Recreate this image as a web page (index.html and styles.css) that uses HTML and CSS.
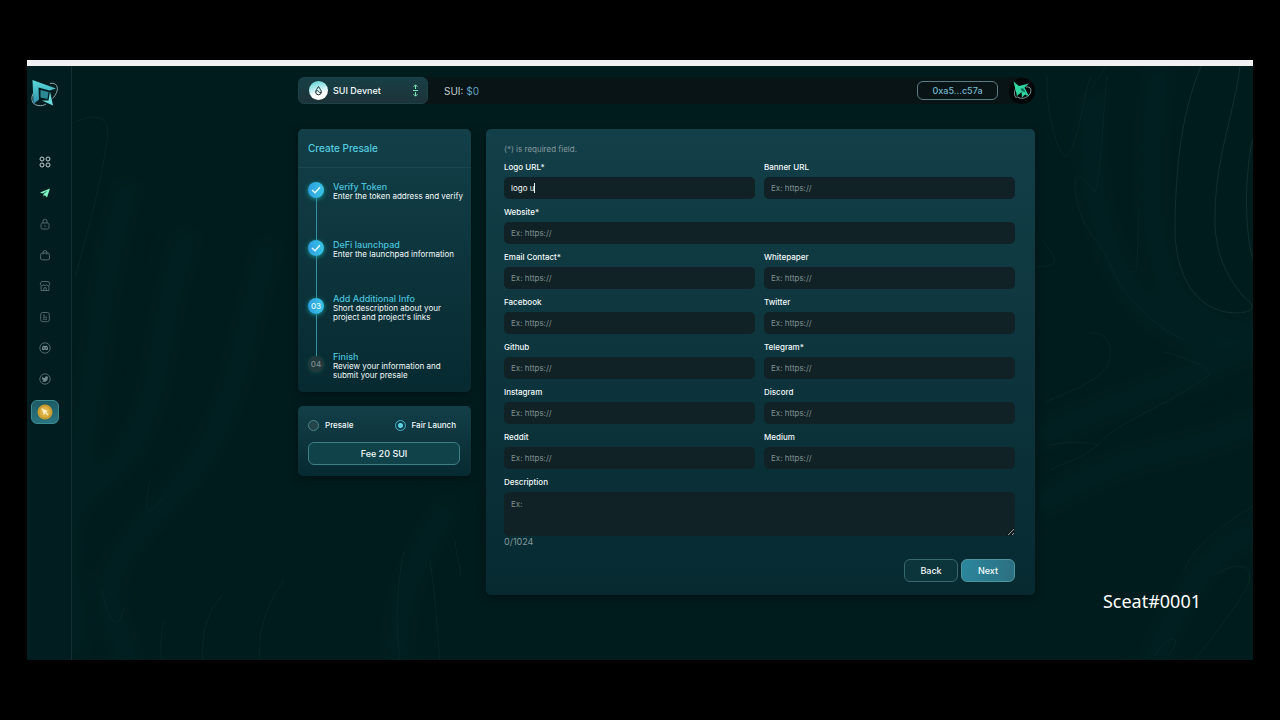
FILE: index.html
```html
<!DOCTYPE html>
<html lang="en">
	<head>
		<meta charset="UTF-8">
		<title>Create Presale</title>
		<link rel="stylesheet" href="styles.css">
	</head>
	<body>
		<div class="app">
			<!-- background swirls -->
			<svg class="swirls" viewBox="27 66 1226 594" preserveAspectRatio="xMidYMid slice" aria-hidden="true">
				<g class="bands">
					<path d="M1160 66C1145 160 1145 280 1190 310S1240 330 1260 330"/>
					<path d="M1095 90C1080 190 1110 260 1130 290S1200 350 1260 350"/>
					<path d="M1035 440C1110 400 1170 390 1260 340"/>
					<path d="M1035 510C1130 440 1190 460 1260 420"/>
					<path d="M1150 670C1180 590 1220 540 1260 530"/>
					<path d="M130 180C90 300 100 420 60 520"/>
					<path d="M190 230C150 330 170 430 100 480S90 600 70 660"/>
					<path d="M270 240C230 380 240 430 150 520S150 640 120 670"/>
					<path d="M400 670C390 590 430 540 450 500"/>
				</g>
				<g class="lines">
					<path d="M1201 66C1185 105 1176 150 1175 225C1174 280 1200 313 1236 313C1262 312 1250 302 1244 297C1225 275 1214 250 1215 215C1215 160 1235 110 1240 66"/>
					<path d="M1254 135C1244 170 1244 235 1254 262"/>
				</g>
				<g class="lines faint">
					<path d="M1047 75C1046 110 1055 145 1064 156C1075 160 1083 100 1090 77C1095 90 1100 75 1105 66"/>
					<path d="M1107 75C1103 120 1100 180 1095 192C1082 175 1075 172 1075 185C1076 225 1100 240 1110 265C1130 310 1170 335 1185 340"/>
					<path d="M1139 210L1137 265C1137 275 1130 272 1128 270"/>
					<path d="M1035 267C1060 266 1060 262 1042 240"/>
					<path d="M1090 333C1110 332 1114 350 1108 365C1095 385 1060 395 1045 402"/>
					<path d="M1165 352C1200 362 1218 372 1205 378C1150 415 1120 420 1098 445C1080 440 1065 443 1050 445M1098 445C1080 460 1065 462 1050 470"/>
					<path d="M1254 506C1220 525 1190 550 1185 570"/>
					<path d="M1213 575C1240 560 1255 565 1248 585C1235 610 1210 640 1195 660"/>
					<path d="M1155 656C1160 645 1170 636 1176 641C1174 650 1168 654 1164 660"/>
					<path d="M75 122C90 115 112 112 107 140C100 190 85 240 75 278"/>
					<path d="M150 480C142 520 150 515 162 498"/>
					<path d="M102 590C112 634 120 626 124 608"/>
					<path d="M404 552C395 590 396 630 400 660M430 560C436 600 437 630 440 660M455 540C456 555 460 565 461 575"/>
					<path d="M222 595C202 620 202 640 203 660M284 580C262 610 258 640 260 660M164 620C160 640 160 650 162 660"/>
				</g>
			</svg>

			<aside class="sidebar">
				<a href="#" class="logo" aria-label="Home">
					<svg width="30" height="30" viewBox="0 0 30 30">
						<defs>
							<linearGradient id="lg" x1="0" y1="0" x2="0" y2="1">
								<stop offset="0" stop-color="#5cd9da"/>
								<stop offset="1" stop-color="#2f8fa8"/>
							</linearGradient>
						</defs>
						<path d="M20 5.500C26 4 29 9 26.500 14.500C25.500 17 24 19 22.500 20.500M3.500 15C.5 20 1.500 26.500 8 27.500C11 28 14 27.500 16 26" fill="none" stroke="#9db7ba" stroke-width=".9"/>
						<path fill="url(#lg)" d="M2.500 2L26 10.500L19.500 12.500L8.500 9.500L9 21.500L3.500 26Z"/>
						<path fill="#2a8992" d="M10.500 12L18.500 14L17.500 21L10.500 19.500Z"/>
						<path fill="#6fdde0" d="M20 13.500L23 27.500L12 22.500L18.500 22.500Z"/>
					</svg>
				</a>
				<nav class="menu">
					<a href="#" class="bright" aria-label="Dashboard">
						<svg viewBox="0 0 12 12"><circle cx="3" cy="3" r="2"/><circle cx="9" cy="3" r="2"/><circle cx="3" cy="9" r="2"/><circle cx="9" cy="9" r="2"/></svg>
					</a>
					<a href="#" class="active" aria-label="Launchpad">
						<svg viewBox="0 0 12 12"><path d="M11 1.500L8 10.500L5.800 8.200L4.500 9.500V7L8.500 3.800L3.500 6.500L1 5.500Z"/></svg>
					</a>
					<a href="#" aria-label="Lock">
						<svg viewBox="0 0 12 12"><rect x="2" y="5" width="8" height="6" rx="1.500"/><path d="M4 5V3.200A2 2 0 0 1 8 3.200V5M6 7.200V8.800"/></svg>
					</a>
					<a href="#" aria-label="Shop">
						<svg viewBox="0 0 12 12"><path d="M3 4H9Q10 4 10.200 5L10.500 9Q10.500 10.800 8.800 10.800H3.200Q1.500 10.800 1.500 9L1.800 5Q2 4 3 4ZM4.200 5.500V3Q4.200 1.500 6 1.500T7.800 3V5.500"/></svg>
					</a>
					<a href="#" aria-label="Market">
						<svg viewBox="0 0 12 12"><path d="M2.500 1.500H9.500L10.800 4.200Q10.500 5.600 9.200 5.600T7.500 4.500Q7.200 5.600 6 5.600T4.500 4.500Q4.200 5.600 2.900 5.600T1.200 4.200ZM2 6V10.500H10V6M4.800 10.500V7.800H7.200V10.500"/></svg>
					</a>
					<a href="#" aria-label="Docs">
						<svg viewBox="0 0 12 12"><rect x="1.700" y="1.500" width="8.600" height="9.200" rx="2"/><path d="M4 4.200H6M4 6.200H8M4 8.200H8"/></svg>
					</a>
					<a href="#" aria-label="Discord">
						<svg viewBox="0 0 12 12"><circle cx="6" cy="6" r="5.200"/><path class="solid" d="M3.800 4L5 3.600L5.300 4.100H6.700L7 3.600L8.200 4Q9.300 5.800 9.100 7.500Q8.400 8.200 7.500 8.300L7.100 7.700H4.900L4.500 8.300Q3.600 8.200 2.900 7.500Q2.700 5.800 3.800 4ZM4.700 5.300A.6.600 0 1 0 4.700 6.600A.6.600 0 1 0 4.700 5.300M7.300 5.300A.6.600 0 1 0 7.300 6.600A.6.600 0 1 0 7.300 5.300"/></svg>
					</a>
					<a href="#" aria-label="Twitter">
						<svg viewBox="0 0 12 12"><circle cx="6" cy="6" r="5.200"/><path class="solid" d="M3 3.800Q4.300 5 5.900 5Q5.800 3.300 7.300 3.200Q8 3.200 8.400 3.700L9.300 3.400L8.800 4.200L9.400 4.200L8.800 4.900Q8.700 8.500 5.200 8.800Q3.800 8.800 2.900 8.200Q4 8.200 4.500 7.700Q3.600 7.500 3.400 6.700H3.900Q3 6.200 3 5.300L3.400 5.400Q2.700 4.700 3 3.800Z"/></svg>
					</a>
				</nav>
				<button type="button" class="coin" aria-label="Token">
					<svg width="16" height="16" viewBox="0 0 16 16">
						<circle cx="8" cy="8" r="7.500" fill="#cfa02f"/>
						<circle cx="8" cy="8" r="6" fill="#dcb044" stroke="#b98a22" stroke-width=".6"/>
						<path d="M4.500 4L11 7L9.200 8L11.500 10.500L10.500 11.500L8.500 9.200L6.800 11Z" fill="#fbeec4"/>
					</svg>
				</button>
			</aside>

			<main class="main">
				<header class="topbar">
					<label class="network">
						<svg width="19" height="19" viewBox="0 0 19 19" aria-hidden="true">
							<defs>
								<linearGradient id="drop" x1=".3" y1="0" x2=".6" y2="1">
									<stop offset="0" stop-color="#5fd6d9"/>
									<stop offset=".7" stop-color="#fff"/>
								</linearGradient>
							</defs>
							<circle cx="9.500" cy="9.500" r="9.500" fill="url(#drop)"/>
							<path d="M9.500 5.500C11 8 12.300 9.300 12.300 11A2.800 2.800 0 0 1 6.700 11C6.700 9.300 8 8 9.500 5.500ZM7 10.200Q8.800 9 9.700 10.500T12.200 11.500" fill="none" stroke="#1d3034"/>
						</svg>
						<select aria-label="Network">
							<option>SUI Devnet</option>
						</select>
						<svg width="7" height="13" viewBox="0 0 7 13" class="updown" aria-hidden="true">
							<path d="M3.500 5V1M1.500 2.800L3.500.800L5.500 2.800M1 6.500H6M3.500 8V12M1.500 10.200L3.500 12.200L5.500 10.200"/>
						</svg>
					</label>
					<div class="account">
						<span class="balance">SUI: <span class="amount">$0</span></span>
						<button type="button" class="address">0xa5...c57a</button>
						<svg width="26" height="26" viewBox="0 0 26 26" aria-hidden="true">
							<circle cx="13" cy="13" r="13" fill="#010607"/>
							<path d="M17 9C22 8 23.500 13 20 17C16 21.500 10 21 7.500 18M7.500 10C5 12.500 4.500 17 7.500 20" fill="none" stroke="#9fc9bf" stroke-width=".8"/>
							<path d="M4.500 3.500L10 8L20 5.500L15.500 9.500L20 18.500L16 16.500L13 19.500L12.500 14L8 18Z" fill="#2fd6a0"/>
							<path d="M11.500 10.500L14.500 10.500L16.500 14.500L12.500 13Z" fill="#0c6f5c"/>
						</svg>
					</div>
				</header>

				<div class="content">
					<div class="left">
						<section class="panel steps">
							<h1>Create Presale</h1>
							<ol>
								<li>
									<span class="dot done"><svg width="10" height="8" viewBox="0 0 10 8"><path d="M1 4L4 6.700L9 1.300"/></svg></span>
									<div><h2>Verify Token</h2><p>Enter the token address and verify</p></div>
								</li>
								<li>
									<span class="dot done"><svg width="10" height="8" viewBox="0 0 10 8"><path d="M1 4L4 6.700L9 1.300"/></svg></span>
									<div><h2>DeFi launchpad</h2><p>Enter the launchpad information</p></div>
								</li>
								<li>
									<span class="dot current">03</span>
									<div><h2>Add Additional Info</h2><p>Short description about your project and project's links</p></div>
								</li>
								<li>
									<span class="dot">04</span>
									<div><h2>Finish</h2><p>Review your information and submit your presale</p></div>
								</li>
							</ol>
						</section>
						<section class="panel kind">
							<div class="radios">
								<label><input type="radio" name="kind"> Presale</label>
								<label><input type="radio" name="kind" checked> Fair Launch</label>
							</div>
							<button type="button" class="fee">Fee 20 SUI</button>
						</section>
					</div>

					<form class="panel info" action="" method="post">
						<p class="note">(*) is required field.</p>
						<div class="fields">
							<div class="field"><label for="logo">Logo URL*</label><input type="text" id="logo" class="typing" value="logo u"></div>
							<div class="field"><label for="banner">Banner URL</label><input type="text" id="banner" placeholder="Ex: https://"></div>
							<div class="field wide"><label for="website">Website*</label><input type="text" id="website" placeholder="Ex: https://"></div>
							<div class="field"><label for="email">Email Contact*</label><input type="text" id="email" placeholder="Ex: https://"></div>
							<div class="field"><label for="whitepaper">Whitepaper</label><input type="text" id="whitepaper" placeholder="Ex: https://"></div>
							<div class="field"><label for="facebook">Facebook</label><input type="text" id="facebook" placeholder="Ex: https://"></div>
							<div class="field"><label for="twitter">Twitter</label><input type="text" id="twitter" placeholder="Ex: https://"></div>
							<div class="field"><label for="github">Github</label><input type="text" id="github" placeholder="Ex: https://"></div>
							<div class="field"><label for="telegram">Telegram*</label><input type="text" id="telegram" placeholder="Ex: https://"></div>
							<div class="field"><label for="instagram">Instagram</label><input type="text" id="instagram" placeholder="Ex: https://"></div>
							<div class="field"><label for="discord">Discord</label><input type="text" id="discord" placeholder="Ex: https://"></div>
							<div class="field"><label for="reddit">Reddit</label><input type="text" id="reddit" placeholder="Ex: https://"></div>
							<div class="field"><label for="medium">Medium</label><input type="text" id="medium" placeholder="Ex: https://"></div>
							<div class="field wide"><label for="description">Description</label><textarea id="description" maxlength="1024" placeholder="Ex:"></textarea></div>
						</div>
						<p class="counter">0/1024</p>
						<div class="actions">
							<button type="button">Back</button>
							<button type="submit" class="next">Next</button>
						</div>
					</form>
				</div>
			</main>
			<div class="watermark">Sceat#0001</div>
		</div>
	</body>
</html>
```
FILE: styles.css
```css
* {
	box-sizing: border-box;
	margin: 0;
	padding: 0;
}
body {
	min-height: 100vh;
	padding: 60px 27px;
	background-color: #000;
	color: #f4fafb;
	font-family: Inter, "Liberation Sans", sans-serif;
	font-size: 8px;
	line-height: 12px;
}
button, input, select, textarea {
	font: inherit;
	color: inherit;
}
button {
	cursor: pointer;
}
.app {
	position: relative;
	display: flex;
	min-height: calc(100vh - 120px);
	border-top: 6px solid #f1f0f2;
	background-color: #011c1d;
	overflow: hidden;
}
.swirls {
	position: absolute;
	top: 0;
	left: 0;
	width: 100%;
	height: 100%;
	fill: none;
}
.bands {
	stroke: #022629;
	stroke-width: 24;
	opacity: .4;
	filter: blur(10px);
}
.lines {
	stroke: #122f30;
	stroke-width: 1;
}
.faint {
	stroke: #082627;
}

/* sidebar */
.sidebar {
	position: relative;
	display: flex;
	flex-direction: column;
	align-items: center;
	width: 45px;
	padding: 12px 8px 0 0;
	border-right: 1px solid #142e31;
	background-color: #011d20;
}
.logo {
	height: 30px;
}
.menu {
	display: flex;
	flex-direction: column;
	margin-top: 38px;
}
.menu a {
	display: flex;
	align-items: center;
	height: 31px;
}
.menu svg {
	width: 12px;
	height: 12px;
	fill: none;
	stroke: #64797c;
	stroke-width: .8;
}
.menu .bright svg {
	stroke: #c3cfd0;
	stroke-width: 1;
}
.menu .active svg {
	fill: #7df5c0;
	stroke: none;
}
.menu .solid {
	fill: #74898c;
	fill-rule: evenodd;
	stroke: none;
}
.coin {
	display: flex;
	align-items: center;
	justify-content: center;
	width: 28px;
	height: 24px;
	margin-top: 6px;
	border: 1px solid #3c8a92;
	border-radius: 6px;
	background: linear-gradient(#1d5a64, #2b7580);
}

/* main column */
.main {
	position: relative;
	flex: 1;
	padding: 11px 20px 65px 28px;
}
.topbar, .content {
	display: flex;
	max-width: 737px;
	margin: 0 auto;
}
.topbar {
	height: 27px;
	font-size: 10px;
	background: #081416;
	border-radius: 6px 13px 13px 6px;
}
.network {
	display: flex;
	align-items: center;
	gap: 5px;
	width: 130px;
	padding: 0 8px 0 10px;
	border: 1px solid #1c4248;
	border-radius: 6px;
	background: linear-gradient(#183f46, #1c3338);
}
.network select {
	flex: 1;
	min-width: 0;
	appearance: none;
	border: none;
	background: none;
	font-size: 9px;
	font-weight: 500;
}
.updown {
	fill: none;
	stroke: #7be3b4;
}
.account {
	display: flex;
	flex: 1;
	align-items: center;
	padding-left: 16px;
}
.balance {
	flex: 1;
	color: #c5d0d2;
}
.amount {
	color: #62a3c6;
}
.address {
	width: 81px;
	height: 19px;
	margin-right: 11px;
	border: 1px solid #5c7c84;
	border-radius: 6px;
	background: none;
	color: #79b8cd;
	font-size: 9px;
	font-weight: 500;
}
.content {
	align-items: flex-start;
	gap: 15px;
	margin-top: 25px;
}
.panel {
	border-radius: 5px;
	background: linear-gradient(#133f48, #072a31);
	box-shadow: 0 3px 8px rgba(0, 10, 12, .5);
}
.left {
	display: flex;
	flex-direction: column;
	gap: 14px;
	width: 173px;
}
.steps h1 {
	padding: 13px 10px 12px;
	border-bottom: 1px solid #1c464d;
	color: #55cde0;
	font-size: 10px;
	font-weight: 500;
	line-height: 13px;
}
.steps ol {
	display: flex;
	flex-direction: column;
	gap: 28px;
	padding: 7px 6px 13px 10px;
	list-style: none;
}
.steps li {
	position: relative;
	display: flex;
	align-items: center;
	gap: 9px;
	height: 30px;
}
.steps li div {
	flex: 1;
	padding-top: 2px;
}
.steps li + li::before {
	content: "";
	position: absolute;
	left: 8px;
	bottom: 23px;
	width: 1px;
	height: 42px;
	background-color: #36919f;
}
.steps h2 {
	color: #49c3dc;
	font-size: 9px;
	font-weight: 500;
	line-height: 11px;
}
.steps p {
	max-width: 130px;
	line-height: 9px;
}
.dot {
	display: flex;
	align-items: center;
	justify-content: center;
	width: 16px;
	height: 16px;
	border-radius: 50%;
	background-color: #21393d;
	color: #7d8d90;
	font-weight: 500;
	box-shadow: 0 1px 4px rgba(20, 90, 80, .6);
}
.done, .current {
	background: linear-gradient(90deg, #2d9ee0, #38c5e6);
	color: #e6f7fb;
	box-shadow: 0 1px 4px rgba(20, 200, 200, .7);
}
.dot svg {
	fill: none;
	stroke: #e6f7fb;
	stroke-width: 1.5;
}
.kind {
	padding: 13px 11px 11px 10px;
}
.radios {
	display: flex;
	justify-content: space-between;
	padding-right: 4px;
	font-weight: 500;
}
.radios label {
	display: flex;
	align-items: center;
	gap: 6px;
}
.radios input {
	width: 11px;
	height: 11px;
	appearance: none;
	border: 1px solid #4b8289;
	border-radius: 50%;
	background-color: #234549;
}
.radios input:checked {
	border-color: #3fb0c8;
	background: radial-gradient(#5fd3e6 0 2px, #12404a 3px);
}
.fee, .actions button {
	height: 23px;
	border: 1px solid #37686b;
	border-radius: 6px;
	background: #10424a;
	font-size: 9px;
	font-weight: 500;
}
.fee {
	width: 100%;
	margin-top: 11px;
	border-color: #3f8084;
}

/* form */
.info {
	flex: 1;
	padding: 14px 20px 13px 18px;
}
.note {
	margin-bottom: 6px;
	color: #83999d;
}
.fields {
	display: grid;
	grid-template-columns: 1fr 1fr;
	gap: 7px 9px;
}
.field {
	display: flex;
	flex-direction: column;
	gap: 4px;
	font-weight: 500;
}
.wide {
	grid-column: 1 / -1;
}
.field input, .field textarea {
	height: 22px;
	padding: 0 7px;
	border: none;
	border-radius: 5px;
	outline: none;
	background-color: #102225;
	font-weight: 400;
}
.field textarea {
	height: 44px;
	padding: 6px 7px;
	resize: vertical;
}
.field ::placeholder {
	color: #7d9093;
}
/* text cursor of the field being edited */
.field .typing {
	background-image: linear-gradient(#e9f3f4, #e9f3f4);
	background-repeat: no-repeat;
	background-position: 30px 6px;
	background-size: 1px 10px;
}
.counter {
	color: #83999d;
	font-size: 9px;
}
.actions {
	display: flex;
	justify-content: flex-end;
	gap: 3px;
	margin-top: 11px;
}
.actions button {
	width: 54px;
	background: #0b353b;
}
.actions .next {
	border-color: #4e95a0;
	background: linear-gradient(100deg, #2b879d, #2c6f80);
}

.watermark {
	position: absolute;
	right: 52px;
	bottom: 46px;
	color: #fff;
	font-family: "Noto Sans", sans-serif;
	font-size: 18px;
	line-height: 26px;
}
```
